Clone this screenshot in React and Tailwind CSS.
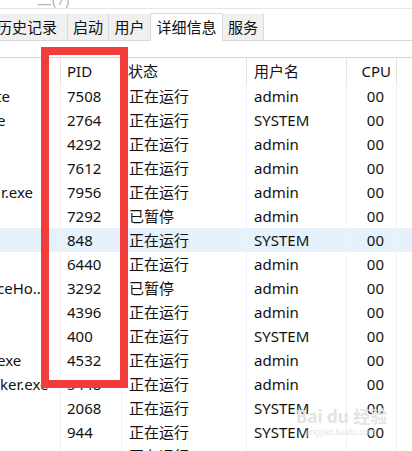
import React from 'react';

const rows = [
  { name: 'te', nameCls: '-ml-[4px]', pid: '7508', status: '正在运行', user: 'admin', cpu: '00' },
  { name: 'e', nameCls: '-ml-[3px]', pid: '2764', status: '正在运行', user: 'SYSTEM', cpu: '00' },
  { name: '', nameCls: '', pid: '4292', status: '正在运行', user: 'admin', cpu: '00' },
  { name: '', nameCls: '', pid: '7612', status: '正在运行', user: 'admin', cpu: '00' },
  { name: 'r.exe', nameCls: 'ml-[1px]', pid: '7956', status: '正在运行', user: 'admin', cpu: '00' },
  { name: '', nameCls: '', pid: '7292', status: '已暂停', user: 'admin', cpu: '00' },
  { name: '', nameCls: '', pid: '848', status: '正在运行', user: 'SYSTEM', cpu: '00', active: true },
  { name: '', nameCls: '', pid: '6440', status: '正在运行', user: 'admin', cpu: '00' },
  { name: 'ceHo...', nameCls: '-ml-[3px]', pid: '3292', status: '已暂停', user: 'admin', cpu: '00' },
  { name: '', nameCls: '', pid: '4396', status: '正在运行', user: 'admin', cpu: '00' },
  { name: '', nameCls: '', pid: '400', status: '正在运行', user: 'SYSTEM', cpu: '00' },
  { name: 'exe', nameCls: '-ml-[3px]', pid: '4532', status: '正在运行', user: 'admin', cpu: '00' },
  { name: 'ker.exe', nameCls: 'ml-0', pid: '5448', status: '正在运行', user: 'admin', cpu: '00' },
  { name: '', nameCls: '', pid: '2068', status: '正在运行', user: 'SYSTEM', cpu: '00' },
  { name: '', nameCls: '', pid: '944', status: '正在运行', user: 'SYSTEM', cpu: '00' },
  { name: '', nameCls: '', pid: '', status: '正在运行', user: '', cpu: '' },
];

function Row({ row }) {
  return (
    <div className={`flex h-[24px] items-center ${row.active ? 'bg-[#e5f1fb]' : ''}`}>
      <div className="w-[61px] h-full flex items-center overflow-hidden whitespace-nowrap border-r border-[#eef1f5]">
        <span className={row.nameCls}>{row.name}</span>
      </div>
      <div className="w-[61px] h-full flex items-center pl-[6px] border-r border-[#eef1f5]">{row.pid}</div>
      <div className="w-[125px] h-full flex items-center pl-[7px] border-r border-[#eef1f5]">{row.status}</div>
      <div className="w-[100px] h-full flex items-center pl-[7px] border-r border-[#eef1f5]">{row.user}</div>
      <div className="w-[50px] h-full flex items-center justify-end pr-[12px] border-r border-[#eef1f5]">{row.cpu}</div>
      <div className="flex-1 h-full" />
    </div>
  );
}

export default function App() {
  return (
    <div className="relative w-[412px] h-[451px] overflow-hidden bg-white text-[15px] text-[#111] font-['Noto_Sans','Noto_Sans_CJK_SC',sans-serif]">
      {/* top strip, mostly cut off */}
      <div className="h-[9px] border-b border-[#e6e6e6] overflow-hidden">
        <div className="pl-[18px] -mt-[12px] text-[#b5b5b5] blur-[0.6px]">一 二(7)</div>
      </div>

      {/* tabs */}
      <div className="flex items-end h-[32px] border-b border-[#d9d9d9]">
        <div className="w-[68px] h-[26px] flex items-center overflow-hidden bg-[#f0f0f0] border-r border-[#d9d9d9] whitespace-nowrap">
          <span className="-ml-[3px]">历史记录</span>
        </div>
        <div className="w-[41px] h-[26px] flex items-center justify-center bg-[#f0f0f0] border-r border-[#d9d9d9]">启动</div>
        <div className="w-[41px] h-[26px] flex items-center justify-center bg-[#f0f0f0]">用户</div>
        <div className="w-[73px] h-[28px] -mb-px flex items-center justify-center bg-white border-x border-t border-[#d9d9d9]">详细信息</div>
        <div className="w-[41px] h-[26px] flex items-center justify-center bg-[#f0f0f0] border-r border-[#d9d9d9]">服务</div>
      </div>

      <div className="h-[16px]" />

      {/* header */}
      <div className="flex h-[27px] items-center border-t border-[#d5d5d5]">
        <div className="w-[61px] h-full border-r border-[#e3e3e3]" />
        <div className="w-[61px] h-full flex items-center pl-[6px] border-r border-[#e3e3e3]">PID</div>
        <div className="w-[125px] h-full flex items-center pl-[6px] border-r border-[#e3e3e3]">状态</div>
        <div className="w-[100px] h-full flex items-center pl-[7px] border-r border-[#e3e3e3]">用户名</div>
        <div className="w-[50px] h-full flex items-center justify-end pr-[5px] border-r border-[#e3e3e3]">CPU</div>
        <div className="flex-1 h-full" />
      </div>

      {rows.map((row, i) => (
        <Row key={i} row={row} />
      ))}

      {/* faint watermark */}
      <div className="absolute left-[296px] top-[408px] whitespace-nowrap text-[#e4e4e4] leading-none pointer-events-none">
        <div className="text-[17px] font-bold">Bai du 经验</div>
        <div className="text-[8px] mt-[3px] pl-[10px]">jingyan.baidu.com</div>
      </div>

      {/* red annotation box */}
      <div className="absolute left-[41px] top-[47px] w-[87px] h-[341px] border-[8px] border-[#f23c3c] pointer-events-none" />
    </div>
  );
}
